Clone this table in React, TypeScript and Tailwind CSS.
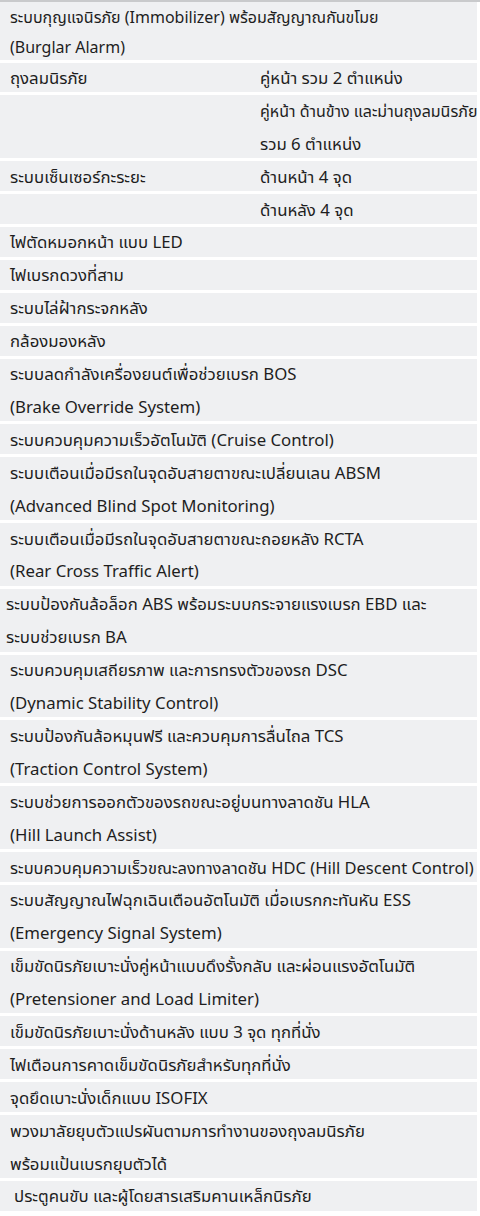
import React from "react";

type Row = { l?: string[]; r?: string[]; pl?: string };

const rows: Row[] = [
  { l: ["~ระบบกุญแจนิรภัย (Immobilizer) พร้อมสัญญาณกันขโมย", "~(Burglar Alarm)"] },
  { l: ["ถุงลมนิรภัย"], r: ["คู่หน้า รวม 2 ตำแหน่ง"] },
  { r: ["~คู่หน้า ด้านข้าง และม่านถุงลมนิรภัย", "รวม 6 ตำแหน่ง"] },
  { l: ["ระบบเซ็นเซอร์กะระยะ"], r: ["ด้านหน้า 4 จุด"] },
  { r: ["ด้านหลัง 4 จุด"] },
  { l: ["ไฟตัดหมอกหน้า แบบ LED"] },
  { l: ["ไฟเบรกดวงที่สาม"] },
  { l: ["ระบบไล่ฝ้ากระจกหลัง"] },
  { l: ["กล้องมองหลัง"] },
  { l: ["ระบบลดกำลังเครื่องยนต์เพื่อช่วยเบรก BOS", "(Brake Override System)"] },
  { l: ["ระบบควบคุมความเร็วอัตโนมัติ (Cruise Control)"] },
  { l: ["ระบบเตือนเมื่อมีรถในจุดอับสายตาขณะเปลี่ยนเลน ABSM", "(Advanced Blind Spot Monitoring)"] },
  { l: ["ระบบเตือนเมื่อมีรถในจุดอับสายตาขณะถอยหลัง RCTA", "(Rear Cross Traffic Alert)"] },
  { l: ["ระบบป้องกันล้อล็อก ABS พร้อมระบบกระจายแรงเบรก EBD และ", "ระบบช่วยเบรก BA"], pl: "pl-[6px]" },
  { l: ["ระบบควบคุมเสถียรภาพ และการทรงตัวของรถ DSC", "(Dynamic Stability Control)"] },
  { l: ["ระบบป้องกันล้อหมุนฟรี และควบคุมการลื่นไถล TCS", "(Traction Control System)"] },
  { l: ["ระบบช่วยการออกตัวของรถขณะอยู่บนทางลาดชัน HLA", "(Hill Launch Assist)"] },
  { l: ["^ระบบควบคุมความเร็วขณะลงทางลาดชัน HDC (Hill Descent Control)"] },
  { l: ["ระบบสัญญาณไฟฉุกเฉินเตือนอัตโนมัติ เมื่อเบรกกะทันหัน ESS", "(Emergency Signal System)"] },
  { l: ["เข็มขัดนิรภัยเบาะนั่งคู่หน้าแบบดึงรั้งกลับ และผ่อนแรงอัตโนมัติ", "(Pretensioner and Load Limiter)"] },
  { l: ["เข็มขัดนิรภัยเบาะนั่งด้านหลัง แบบ 3 จุด ทุกที่นั่ง"] },
  { l: ["ไฟเตือนการคาดเข็มขัดนิรภัยสำหรับทุกที่นั่ง"] },
  { l: ["จุดยึดเบาะนั่งเด็กแบบ ISOFIX"] },
  { l: ["พวงมาลัยยุบตัวแปรผันตามการทำงานของถุงลมนิรภัย", "พร้อมแป้นเบรกยุบตัวได้"] },
  { l: ["ประตูคนขับ และผู้โดยสารเสริมคานเหล็กนิรภัย"], pl: "pl-[14px]" },
];

function Lines({ items }: { items: string[] }) {
  return (
    <>
      {items.map((t, j) => {
        const mark = t[0];
        const size = mark === "~" ? "text-[16px]" : mark === "^" ? "text-[16.5px]" : "";
        const text = mark === "~" || mark === "^" ? t.slice(1) : t;
        return (
          <div key={j} className={`whitespace-nowrap ${size}`}>
            {text}
          </div>
        );
      })}
    </>
  );
}

export default function App() {
  return (
    <div
      className="w-[480px] h-[1216px] overflow-hidden bg-white border-t-2 border-[#c9cacc] text-[#1e1e1e] text-[16.8px] leading-[32.9px]"
      style={{ fontFamily: '"Noto Sans Thai", "Noto Sans", "Open Sans", sans-serif' }}
    >
      <div className="flex flex-col gap-[3px] w-[477px] overflow-hidden">
        {rows.map((row, i) => {
          const n = Math.max(row.l?.length ?? 0, row.r?.length ?? 0);
          const h =
            i === 0
              ? "h-[57.5px] leading-[30px]"
              : n === 2
              ? "h-[62.8px]"
              : "h-[29.9px]";
          return (
            <div key={i} className={`${h} shrink-0 flex bg-[#eff0f2] pt-[4px]`}>
              {row.r ? (
                <>
                  <div className="w-[260px] pl-[10px] shrink-0 flex flex-col justify-center">
                    <Lines items={row.l ?? []} />
                  </div>
                  <div className="flex-1 flex flex-col justify-center">
                    <Lines items={row.r} />
                  </div>
                </>
              ) : (
                <div className={`${row.pl ?? "pl-[10px]"} flex-1 flex flex-col justify-center`}>
                  <Lines items={row.l ?? []} />
                </div>
              )}
            </div>
          );
        })}
      </div>
    </div>
  );
}
